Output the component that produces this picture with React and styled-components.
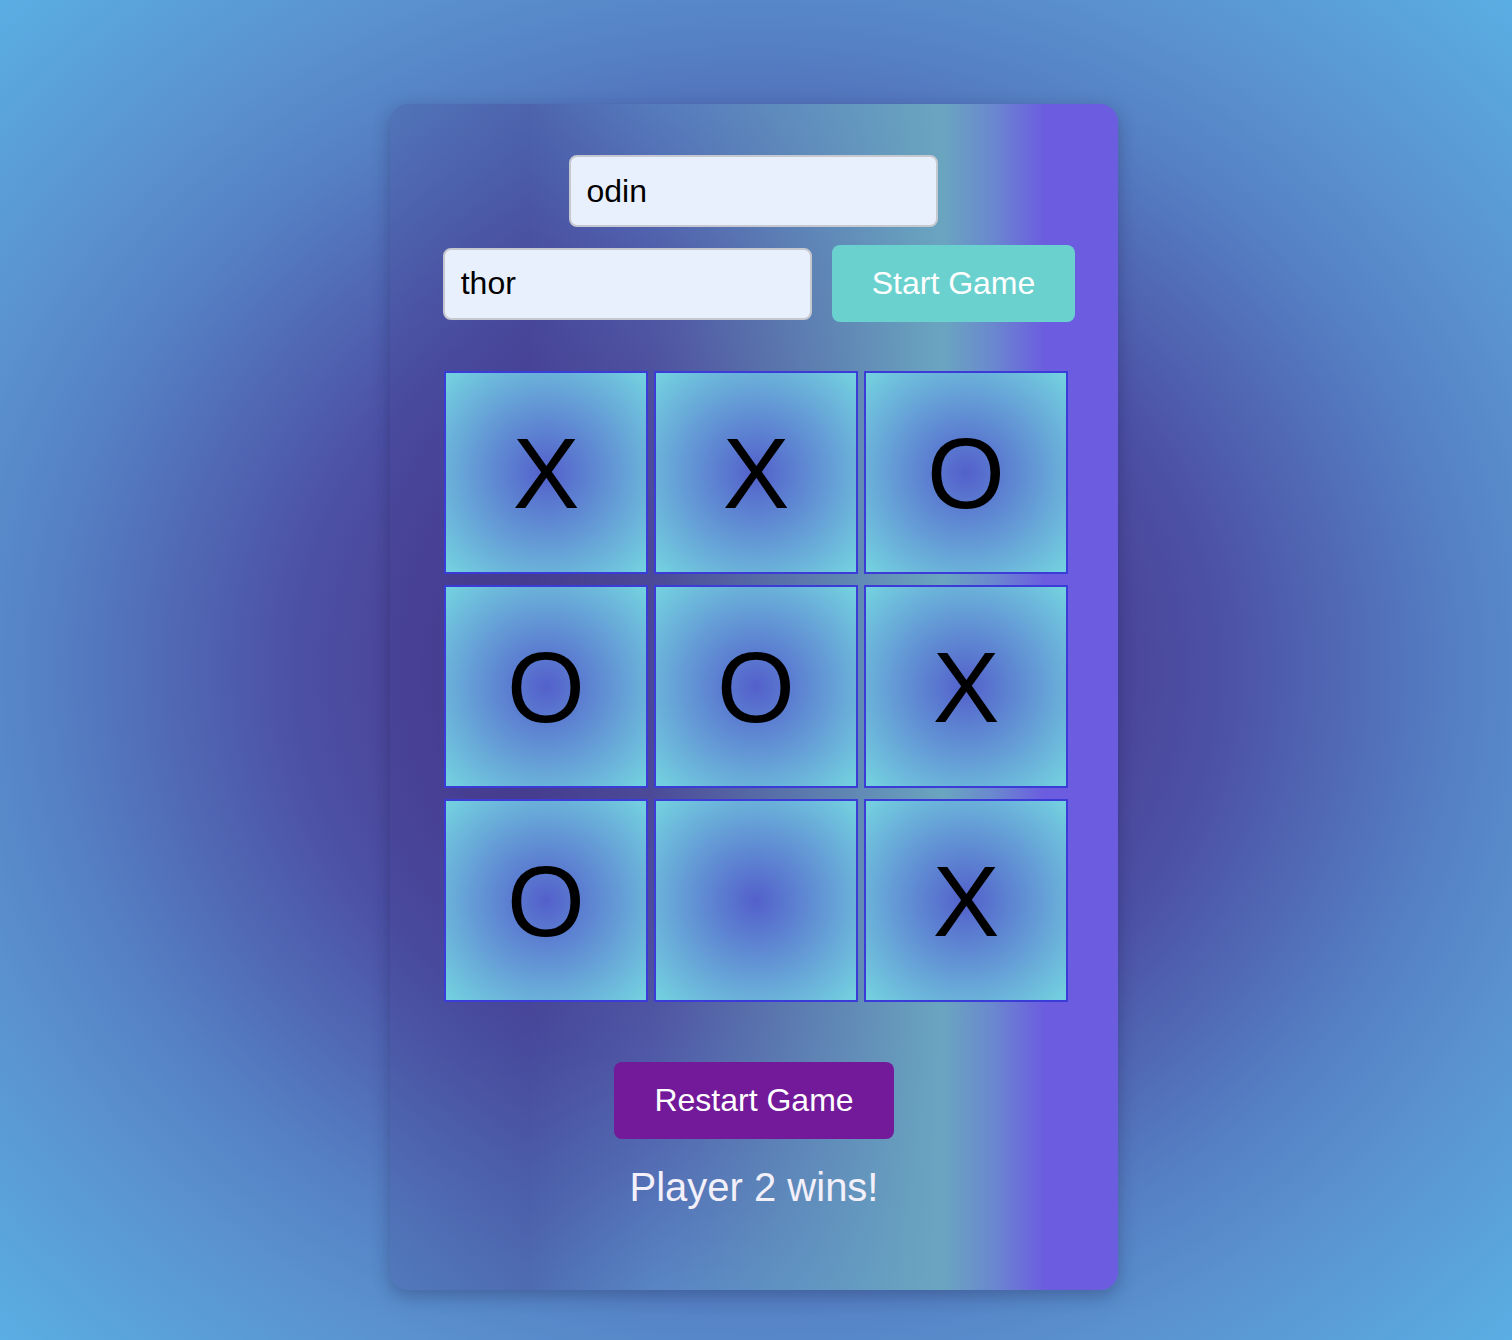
import React from "react";
import styled, { createGlobalStyle } from "styled-components";

const GlobalStyle = createGlobalStyle`
  html, body {
    margin: 0;
    padding: 0;
  }
  body {
    min-height: 100vh;
    font-family: "Liberation Sans", Arial, Helvetica, sans-serif;
    background: radial-gradient(
      ellipse at 50% 50%,
      #45388e 0%,
      #4a4297 30%,
      #4c50a5 43%,
      #5580c4 66%,
      #5a92cf 78%,
      #5aaee3 100%
    );
    background-attachment: fixed;
  }
`;

const Page = styled.div`
  display: flex;
  justify-content: center;
  padding: 104px 4px 51px 0;
`;

const Card = styled.main`
  width: 728px;
  box-sizing: border-box;
  padding: 51px 0 80px;
  border-radius: 18px;
  display: flex;
  flex-direction: column;
  align-items: center;
  box-shadow: 0 6px 18px rgba(20, 20, 60, 0.3);
  background: linear-gradient(
    90deg,
    rgba(60, 50, 130, 0.2) 0%,
    rgba(60, 50, 130, 0.3) 19%,
    rgba(106, 165, 192, 0.12) 36%,
    rgba(106, 165, 192, 0.75) 65%,
    rgba(106, 165, 192, 1) 76%,
    #6a87cf 83%,
    #6c5ce0 90%,
    #6c5ce0 100%
  );
`;

const NameInput = styled.input`
  width: 369px;
  height: 72px;
  box-sizing: border-box;
  padding: 0 16px;
  font-family: "Liberation Sans", Arial, sans-serif;
  font-size: 32px;
  color: #000;
  background: #e8f0fe;
  border: 2px solid #c6c8cf;
  border-radius: 8px;
  outline: none;
`;

const FirstInput = styled(NameInput)`
  margin-right: 2px;
`;

const SecondRow = styled.div`
  display: flex;
  align-items: center;
  gap: 20px;
  margin-top: 18px;
  margin-left: 10px;
`;

const ActionButton = styled.button`
  font-family: "Liberation Sans", Arial, sans-serif;
  font-size: 32px;
  line-height: 37px;
  color: #fff;
  border: none;
  border-radius: 8px;
  padding: 20px 40px;
  cursor: pointer;
  background: ${(p) => p.$bg};
  margin-top: ${(p) => p.$mt || "0"};
`;

const Board = styled.div`
  display: grid;
  grid-template-columns: repeat(3, 204px);
  grid-auto-rows: 203px;
  column-gap: 6px;
  row-gap: 11px;
  margin-top: 49px;
  margin-left: 4px;
`;

const Cell = styled.div`
  box-sizing: border-box;
  border: 2px solid #3b3bd8;
  background: radial-gradient(ellipse at center, #5360cb 0%, #74d3e0 100%);
  display: flex;
  align-items: center;
  justify-content: center;
  font-family: "Liberation Sans", Arial, sans-serif;
  font-size: 100px;
  color: #000;
  line-height: 1;
`;

const Result = styled.p`
  margin: 25px 0 0;
  font-size: 40px;
  line-height: 46px;
  color: #f3f0fa;
`;

const cells = ["X", "X", "O", "O", "O", "X", "O", "", "X"];

export default function App() {
  return (
    <>
      <GlobalStyle />
      <Page>
        <Card>
          <FirstInput defaultValue="odin" />
          <SecondRow>
            <NameInput defaultValue="thor" />
            <ActionButton $bg="#6ad1cf">Start Game</ActionButton>
          </SecondRow>
          <Board>
            {cells.map((c, i) => (
              <Cell key={i}>{c}</Cell>
            ))}
          </Board>
          <ActionButton $bg="#721a9a" $mt="60px">
            Restart Game
          </ActionButton>
          <Result>Player 2 wins!</Result>
        </Card>
      </Page>
    </>
  );
}
